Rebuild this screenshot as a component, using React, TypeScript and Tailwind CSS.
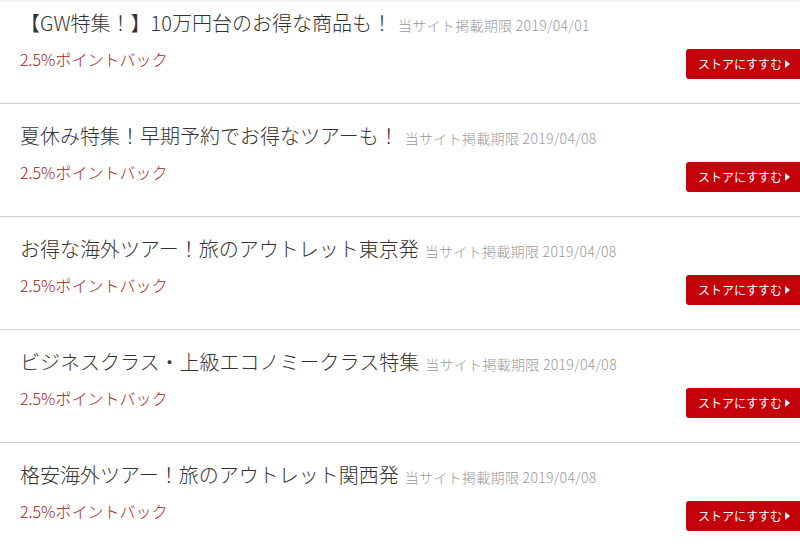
const items = [
  { title: "【GW特集！】10万円台のお得な商品も！", date: "2019/04/01" },
  { title: "夏休み特集！早期予約でお得なツアーも！", date: "2019/04/08" },
  { title: "お得な海外ツアー！旅のアウトレット東京発", date: "2019/04/08" },
  { title: "ビジネスクラス・上級エコノミークラス特集", date: "2019/04/08" },
  { title: "格安海外ツアー！旅のアウトレット関西発", date: "2019/04/08" },
];

function StoreButton() {
  return (
    <a
      href="#"
      className="flex h-[30px] w-[114px] items-center gap-[3px] rounded-l-[3px] bg-[#c4000b] pl-[12px] text-[12px] leading-none text-white"
    >
      <span>ストアにすすむ</span>
      <svg width="5" height="8" viewBox="0 0 5 8" fill="currentColor">
        <path d="M0 0 L5 4 L0 8 Z" />
      </svg>
    </a>
  );
}

export default function App() {
  return (
    <div
      className="h-[554px] w-[800px] overflow-hidden bg-white"
      style={{ fontFamily: '"Noto Sans CJK JP", "Noto Sans", sans-serif' }}
    >
      <div className="h-[3px] bg-gradient-to-b from-[#f2f2f2] to-white" />
      <ul>
        {items.map((item, i) => (
          <li
            key={i}
            className={[
              "border-b border-[#cfcfcf] pl-[20px]",
              i === 0 ? "h-[101px] pt-[8px]" : "h-[113px] pt-[20px]",
            ].join(" ")}
          >
            <div className="flex h-[24px] items-center gap-[6px] whitespace-nowrap">
              <span className="text-[20px] font-light leading-[24px] text-[#333]">{item.title}</span>
              <span className="mt-[3px] text-[14px] leading-[20px] font-light tracking-[0.3px] text-[#999]">
                当サイト掲載期限 {item.date}
              </span>
            </div>
            <div className="mt-[12px] flex h-[33px] items-start justify-between">
              <span className="h-[24px] text-[16px] leading-[24px] font-light text-[#a51a16]">2.5%ポイントバック</span>
              <div className="mt-[2px]">
                <StoreButton />
              </div>
            </div>
          </li>
        ))}
      </ul>
    </div>
  );
}
